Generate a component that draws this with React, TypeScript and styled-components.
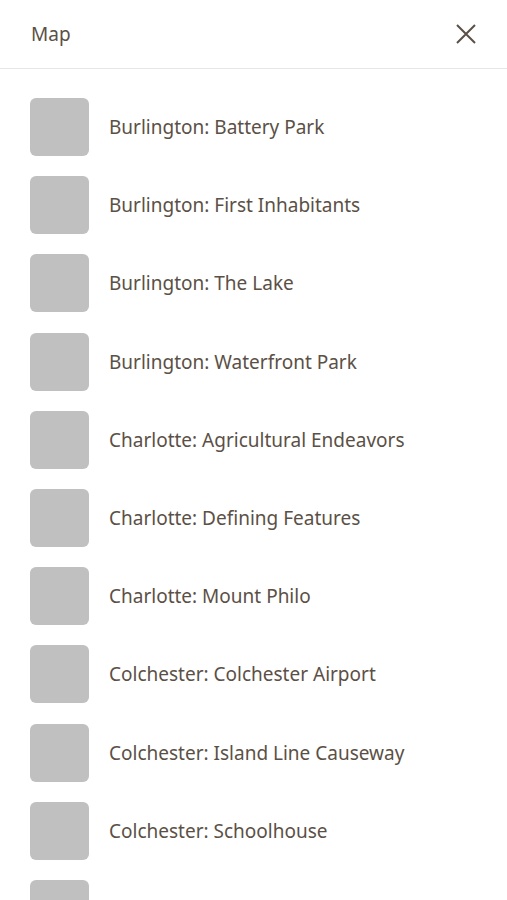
import React from 'react';
import styled, { createGlobalStyle } from 'styled-components';

const GlobalStyle = createGlobalStyle`
  body {
    margin: 0;
    background: #ffffff;
    font-family: "Noto Sans", "Open Sans", sans-serif;
  }
`;

const Page = styled.div`
  display: flex;
  flex-direction: column;
  width: 100%;
  height: 900px;
  overflow: hidden;
`;

const Header = styled.header`
  display: flex;
  align-items: center;
  justify-content: space-between;
  height: 68px;
  padding: 0 29px 0 31px;
  border-bottom: 1px solid #e6e6e6;
  flex-shrink: 0;
`;

const Title = styled.h1`
  margin: 0;
  font-size: 19px;
  font-weight: 400;
  color: #5b5046;
`;

const CloseButton = styled.button`
  display: flex;
  align-items: center;
  justify-content: center;
  width: 24px;
  height: 24px;
  padding: 0;
  border: none;
  background: none;
  color: #5b5046;
  cursor: pointer;
`;

const List = styled.ul`
  list-style: none;
  margin: 0;
  padding: 29px 30px;
  display: flex;
  flex-direction: column;
  gap: 20.2px;
`;

const Item = styled.li`
  display: flex;
  align-items: center;
  gap: 20px;
`;

const Thumb = styled.div`
  width: 59px;
  height: 58px;
  border-radius: 6px;
  background: #c0c0c0;
  flex-shrink: 0;
`;

const Label = styled.span`
  font-size: 19px;
  color: #5b5046;
`;

const places = [
  'Burlington: Battery Park',
  'Burlington: First Inhabitants',
  'Burlington: The Lake',
  'Burlington: Waterfront Park',
  'Charlotte: Agricultural Endeavors',
  'Charlotte: Defining Features',
  'Charlotte: Mount Philo',
  'Colchester: Colchester Airport',
  'Colchester: Island Line Causeway',
  'Colchester: Schoolhouse',
  'Colchester: Winooski River',
];

const App = () => {
  return (
    <Page>
      <GlobalStyle />
      <Header>
        <Title>Map</Title>
        <CloseButton aria-label="Close">
          <svg width="22" height="22" viewBox="0 0 22 22" fill="none" stroke="currentColor" strokeWidth="2">
            <path d="M2 2 L20 20 M20 2 L2 20" />
          </svg>
        </CloseButton>
      </Header>
      <List>
        {places.map((p) => (
          <Item key={p}>
            <Thumb />
            <Label>{p}</Label>
          </Item>
        ))}
      </List>
    </Page>
  );
};

export default App;
